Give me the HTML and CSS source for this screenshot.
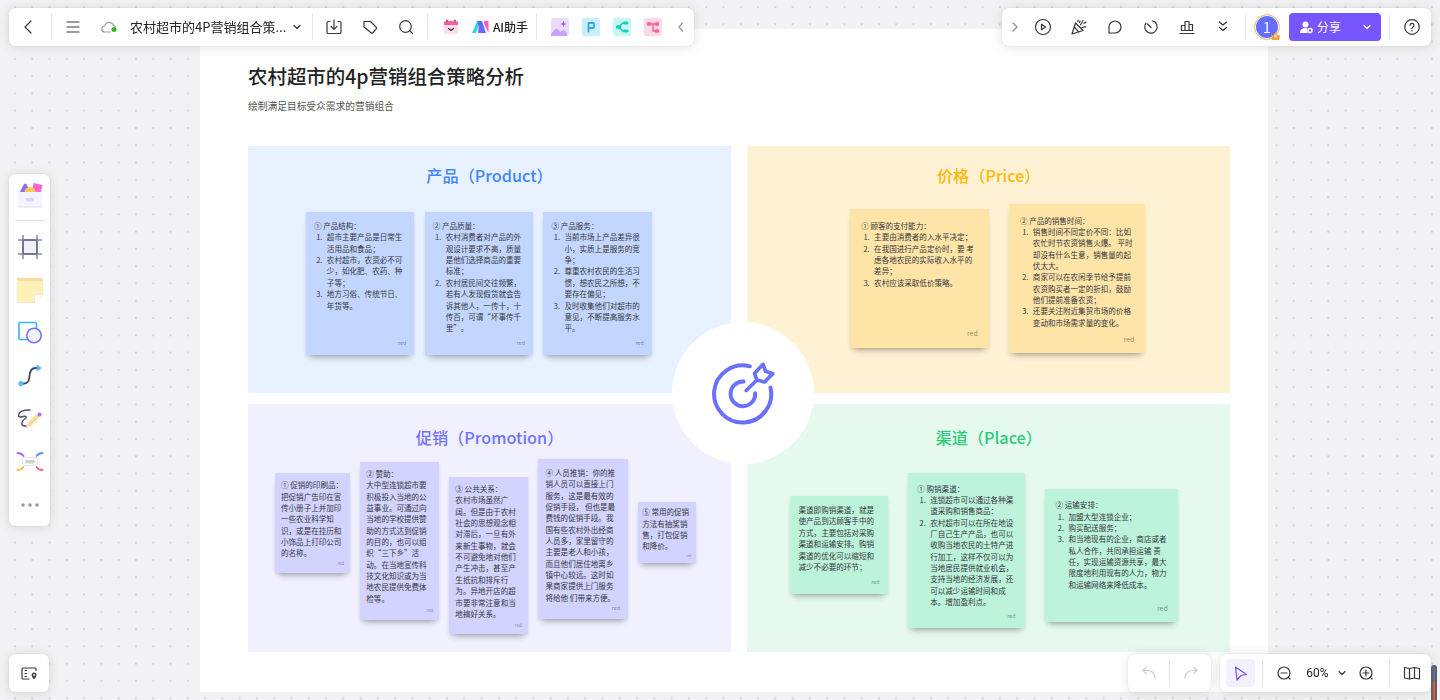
FILE: index.html
```html
<!DOCTYPE html>
<html lang="zh-CN">
<head>
<meta charset="utf-8">
<meta name="viewport" content="width=device-width, initial-scale=1">
<title>农村超市的4P营销组合策略分析</title>
<link rel="stylesheet" href="styles.css">
</head>
<body>
<svg class="dots" aria-hidden="true"><defs><pattern id="dot" x="14" y="6" width="17.28" height="17.28" patternUnits="userSpaceOnUse"><rect width="2" height="2" fill="#d6d6d9"/></pattern></defs><rect width="100%" height="100%" fill="url(#dot)"/></svg>

<main class="canvas">
  <section class="frame">
    <h1>农村超市的4p营销组合策略分析</h1>
    <p class="subtitle">绘制满足目标受众需求的营销组合</p>
    <div class="quadrants">
      <section class="quadrant product">
        <h2>产品（Product）</h2>
        <div class="notes">
          <article class="note n-product"><div><p>① 产品结构：</p><ol><li>超市主要产品是日常生活用品和食品；</li><li>农村超市，农资必不可少，如化肥、农药、种子等；</li><li>地方习俗、传统节日、年货等。</li></ol></div><span class="author">red</span></article>
          <article class="note n-product"><div><p>② 产品质量：</p><ol><li>农村消费者对产品的外观设计要求不高，质量是他们选择商品的重要标准；</li><li>农村居民间交往频繁，若有人发现假货就会告诉其他人，一传十，十传百，可谓“坏事传千里”。</li></ol></div><span class="author">red</span></article>
          <article class="note n-product"><div><p>③ 产品服务：</p><ol><li>当前市场上产品差异很小，实质上是服务的竞争；</li><li>尊重农村农民的生活习惯，想农民之所想，不要存在偏见；</li><li>及时收集他们对超市的意见，不断提高服务水平。</li></ol></div><span class="author">red</span></article>
        </div>
      </section>
      <section class="quadrant price">
        <h2>价格（Price）</h2>
        <div class="notes">
          <article class="note n-pay"><div><p>① 顾客的支付能力：</p><ol><li>主要由消费者的入水平决定；</li><li>在我国进行产品定价时，要 考虑各地农民的实际收入水平的差异；</li><li>农村应该采取低价策略。</li></ol></div><span class="author large">red</span></article>
          <article class="note n-time"><div><p>② 产品的销售时间：</p><ol><li>销售时间不同定价不同：比如农忙时节农资销售火爆。 平时却没有什么生意，销售量的起伏太大。</li><li>商家可以在农闲季节给予提前农资购买者一定的折扣，鼓励他们提前准备农资；</li><li>还要关注附近集贸市场的价格变动和市场需求量的变化。</li></ol></div><span class="author large">red</span></article>
        </div>
      </section>
      <section class="quadrant promotion">
        <h2>促销（Promotion）</h2>
        <div class="notes">
          <article class="note n-print"><div><p>① 促销的印刷品：</p><p>把促销广告印在宣传小册子上并加印一些农业科学知识，或是在挂历和小饰品上打印公司的名称。</p></div><span class="author small">red</span></article>
          <article class="note n-sponsor"><div><p>② 赞助：</p><p>大中型连锁超市要积极投入当地的公益事业。可通过向当地的学校提供赞助的方式达到促销的目的，也可以组织“三下乡”活动。在当地宣传科技文化知识或为当地农民提供免费体检等。</p></div><span class="author small">red</span></article>
          <article class="note n-public"><div><p>③ 公共关系：</p><p>农村市场虽然广阔。但是由于农村社会的思想观念相对滞后，一旦有外来新生事物，就会不可避免地对他们产生冲击，甚至产生抵抗和排斥行为。异地开店的超市要非常注意和当地搞好关系。</p></div><span class="author small">red</span></article>
          <article class="note n-people"><div><p>④ 人员推销：你的推销人员可以直接上门服务，这是最有效的促销手段， 但也是最费钱的促销手段。我国有些农村外出经商人员多，家里留守的主要是老人和小孩，而且他们居住地离乡镇中心较远。这时如果商家提供上门服务将给他 们带来方便。</p></div><span class="author">red</span></article>
          <article class="note n-common"><div><p>⑤ 常用的促销方法有抽奖销售，打包促销和降价。</p></div><span class="author tiny">red</span></article>
        </div>
      </section>
      <section class="quadrant place">
        <h2>渠道（Place）</h2>
        <div class="notes">
          <article class="note n-channel"><div><p>渠道即购销渠道，就是使产品到达顾客手中的方式，主要包括对采购渠道和运输安排。购销渠道的优化可以缩短和减少不必要的环节；</p></div><span class="author">red</span></article>
          <article class="note n-purchase"><div><p>① 购销渠道：</p><ol><li>连锁超市可以通过各种渠道采购和销售商品：</li><li>农村超市可以在所在地设厂自己生产产品，也可以收购当地农民的土特产进行加工，这样不仅可以为当地居民提供就业机会，支持当地的经济发展，还可以减少运输时间和成本。增加盈利点。</li></ol></div><span class="author">red</span></article>
          <article class="note n-transport"><div><p>② 运输安排：</p><ol><li>加盟大型连锁企业；</li><li>购买配送服务；</li><li>和当地现有的企业，商店或者私人合作，共同承担运输 责任，实现运输资源共享，最大限度地利用现有的人力，物力和运输网络来降低成本。</li></ol></div><span class="author large">red</span></article>
        </div>
      </section>
      <div class="hub">
        <svg viewBox="150 150 195 195" fill="none" stroke="#6a70ff" stroke-width="12" stroke-linecap="round" stroke-linejoin="round" aria-hidden="true"><path d="M267 166A86 86 0 1 0 329 230"/><path d="M248 212A37 37 0 1 0 283 247"/><path d="M256 239L288 207M288 207L281 187L307 160L314 181L336 188L311 213Z" stroke-width="11"/></svg>
      </div>
    </div>
  </section>
</main>

<header class="topbar">
  <nav class="panel bar file-bar" aria-label="文件">
    <button class="w36" aria-label="返回"><svg width="18" height="18" viewBox="0 0 18 18"><path d="M12 3L6 9l6 6"/></svg></button>
    <i class="divider"></i>
    <button class="w32" aria-label="菜单"><svg width="18" height="18" viewBox="0 0 18 18"><path d="M3 4h12M3 9h12M3 14h12"/></svg></button>
    <button class="w40" aria-label="已保存"><svg width="18" height="18" viewBox="0 0 18 18"><path d="M10 14H5a3 3 0 0 1-.3-6 4.500 4.500 0 0 1 8.700-.5A3 3 0 0 1 15.500 9" stroke="#999"/><circle cx="14" cy="11.500" r="2.500" fill="#3fb618" stroke="none"/></svg></button>
    <button class="doc-title"><span>农村超市的4P营销组合策...</span><svg width="10" height="10" viewBox="0 0 10 10"><path d="M2 3.500l3 3 3-3"/></svg></button>
    <i class="divider"></i>
    <button class="w32" aria-label="导出"><svg width="18" height="18" viewBox="0 0 18 18"><path d="M5 3.500H3.500a1.500 1.500 0 0 0-1.500 1.500v9a1.500 1.500 0 0 0 1.500 1.500h11a1.500 1.500 0 0 0 1.500-1.500V5a1.500 1.500 0 0 0-1.500-1.500H13M9 2v9M6 8.300l3 3 3-3"/></svg></button>
    <button class="w40" aria-label="标签"><svg width="18" height="18" viewBox="0 0 18 18"><path d="M3 3.500h6.500l6 6a1 1 0 0 1 0 1.200l-4 4.300a1 1 0 0 1-1.200 0L3 9z"/></svg></button>
    <button class="w32" aria-label="搜索"><svg width="18" height="18" viewBox="0 0 18 18"><circle cx="8.500" cy="8.500" r="5.800"/><path d="M13 13l2.500 2.500"/></svg></button>
    <i class="divider"></i>
    <button class="w36" aria-label="日程"><svg class="solid" width="16" height="16" viewBox="0 0 16 16"><rect x="1" y="2" width="14" height="13" rx="2" fill="#ffdce9"/><path d="M1 6V4a2 2 0 0 1 2-2h10a2 2 0 0 1 2 2v2z" fill="#ff5c9c"/><path d="M4 1v1M12 1v1M5.500 9.500l2.500 2 2.500-2" fill="none" stroke="#333" stroke-width="1.200"/></svg></button>
    <button class="ai"><svg class="solid" width="17" height="12" viewBox="0 0 17 12"><path d="M5 0h4L4 12H0z" fill="#35d6e8"/><path d="M5 0h5l4 12H9.500z" fill="#5a6bff"/><path d="M7 4l3 8H6z" fill="#8b5cff"/><path d="M12 0h4.500v12L12 3z" fill="#ff5cb8"/></svg><span>AI助手</span></button>
    <i class="divider"></i>
    <div class="apps">
      <button aria-label="图片"><svg class="solid" width="18" height="18" viewBox="0 0 18 18"><rect width="18" height="18" rx="2" fill="#e9ddff"/><path d="M0 16l3-3.500q2-3 4.500-.5l2 2 2-1.500q2-1 3.500 1.500l1 2v2H0z" fill="#c8a0f8"/><path d="M12.500 3l.9 2.100 2.100.9-2.100.9-.9 2.100-.9-2.100L9.500 6l2.100-.9z" fill="#a063f0"/></svg></button>
      <button aria-label="演示"><svg class="solid" width="18" height="18" viewBox="0 0 18 18"><rect width="18" height="18" rx="2" fill="#c9eeff"/><path d="M6.500 13.500V5H11a1 1 0 0 1 1 1v3a1 1 0 0 1-1 1H6.500" fill="none" stroke="#2fa8ec" stroke-width="1.800"/></svg></button>
      <button aria-label="脑图"><svg class="solid" width="18" height="18" viewBox="0 0 18 18"><rect width="18" height="18" rx="2" fill="#c6f7f1"/><path d="M13 5h-2Q8 5 7 9q1 4 4 4h2" fill="none" stroke="#12cfc0" stroke-width="1.500"/><ellipse cx="5.500" cy="9" rx="2.700" ry="2" fill="#12cfc0"/><rect x="10" y="3.500" width="5.500" height="3" rx="1.500" fill="#12cfc0"/><rect x="10" y="11.500" width="5.500" height="3" rx="1.500" fill="#12cfc0"/></svg></button>
      <button aria-label="流程图"><svg class="solid" width="18" height="18" viewBox="0 0 18 18"><rect width="18" height="18" rx="2" fill="#ffd9e6"/><path d="M5 6h8M9 6v7h4" fill="none" stroke="#ff5c9c" stroke-width="1.400"/><rect x="3" y="4.300" width="4" height="3.500" rx="1" fill="#ff5c9c"/><rect x="11" y="4.300" width="4" height="3.500" rx="1" fill="#ff5c9c"/><rect x="11" y="11.300" width="4" height="3.500" rx="1" fill="#ff5c9c"/></svg></button>
    </div>
    <button class="w26" aria-label="收起"><svg width="12" height="12" viewBox="0 0 12 12"><path d="M7.500 2L4 6l3.500 4" stroke="#999"/></svg></button>
  </nav>

  <nav class="panel bar share-bar" aria-label="协作">
    <button class="w23" aria-label="展开"><svg width="12" height="12" viewBox="0 0 12 12"><path d="M5 2l4 4-4 4" stroke="#888"/></svg></button>
    <button class="w36" aria-label="播放"><svg width="18" height="18" viewBox="0 0 18 18"><circle cx="9" cy="9" r="7.500"/><path d="M7.500 6.300v5.400L11.500 9z"/></svg></button>
    <button class="w36" aria-label="庆祝"><svg width="18" height="18" viewBox="0 0 18 18"><path d="M5.500 5L2 16l11-3.500zM4.300 9l4.500 5M8 3.500V2M10.500 7l2.500-4.500M12 9.500q2-1 4-.5M14 5.500L16 4M9.500 4.500l.5-1.500"/></svg></button>
    <button class="w36" aria-label="评论"><svg width="18" height="18" viewBox="0 0 18 18"><path d="M3 15V9a6 6 0 1 1 6 6z"/></svg></button>
    <button class="w36" aria-label="计时"><svg width="18" height="18" viewBox="0 0 18 18"><path d="M10.500 3a6.200 6.200 0 1 1-6.500 2.200M9 9.500L5.500 6M11 3q1.800.5 3 1.800"/></svg></button>
    <button class="w36" aria-label="投票"><svg width="18" height="18" viewBox="0 0 18 18"><path d="M2 15.500h14M3.500 12.500V7.500H7v5zM7 12.500V3.500h4v9zM11 12.500V6.500h3.500v6z"/></svg></button>
    <button class="w36" aria-label="更多"><svg width="18" height="18" viewBox="0 0 18 18"><path d="M5.500 4L9 7l3.500-3M5.500 9.500l3.500 3 3.500-3"/></svg></button>
    <i class="divider near"></i>
    <button class="avatar" aria-label="用户 1"><span>1</span><svg class="solid" width="9" height="8" viewBox="0 0 9 8"><path d="M0 3l2 .5L4.500 0 7 3.500 9 3 8 8H1z" fill="#f5a03c"/><circle cx="4.500" cy="4" r="1.500" fill="#ffe0a0"/></svg></button>
    <button class="share"><svg class="solid" width="13" height="13" viewBox="0 0 13 13"><circle cx="5.500" cy="3.500" r="3" fill="#fff"/><path d="M0 12q0-5 5.500-5 1.500 0 2.200.5-1.700 2 .1 4.500z" fill="#fff"/><circle cx="10" cy="9.500" r="2" fill="none" stroke="#fff" stroke-width="1.600"/></svg><span>分享</span><svg width="10" height="10" viewBox="0 0 10 10"><path d="M2 3.500l3 3 3-3" stroke="#fff"/></svg></button>
    <i class="divider wide"></i>
    <button class="w28" aria-label="帮助"><svg width="18" height="18" viewBox="0 0 18 18"><circle cx="9" cy="9" r="7.300"/><path d="M7 7.300a2 2 0 1 1 2.800 1.900q-.8.400-.8 1.300M9 12.600v.3"/></svg></button>
  </nav>
</header>

<aside class="panel tools" aria-label="工具">
  <button aria-label="素材"><svg width="30" height="30" viewBox="0 0 30 30"><rect x="3" y="10" width="24" height="17" rx="2" fill="#eeecff"/><path d="M5 12l4-8 2-.5 4 7.500-2 2H6z" fill="#8c6bff"/><path d="M18.500 3l9 2-2 8-8-2z" fill="#ff66cf"/><path d="M9.500 12.500a5.500 5.500 0 0 1 11 0z" fill="#ffc94d"/><path d="M3 12h24v13a2 2 0 0 1-2 2H5a2 2 0 0 1-2-2z" fill="#f4f3ff"/><path d="M4 27h22" stroke="#dddcea" stroke-width="1"/><path d="M11 18h8v2q0 1.500-2 1.500h-4q-2 0-2-1.500z" fill="#d9d8f7"/></svg></button>
  <hr>
  <button aria-label="画框"><svg width="26" height="26" viewBox="0 0 26 26"><rect x="6" y="6" width="14" height="14" fill="#f1f1f5" stroke="#4b4f69" stroke-width="1.500"/><path d="M1.500 6H6M20 6h4.500M1.500 20H6M20 20h4.500M6 1.500V6M20 1.500V6M6 20v4.500M20 20v4.500" stroke="#8487ab" stroke-width="1.500"/></svg></button>
  <button aria-label="便签"><svg width="28" height="28" viewBox="0 0 28 28"><path d="M1.500 2h25v16.500l-8 8h-17z" fill="#fff0b8" stroke="#efe3bd" stroke-width=".6"/><path d="M1.500 2h25v3h-25z" fill="#f9dea1"/><path d="M18.500 26.500v-8h8z" fill="#fff" stroke="#e6e0cf" stroke-width=".5"/></svg></button>
  <button aria-label="形状"><svg width="26" height="26" viewBox="0 0 26 26"><rect x="2" y="2.500" width="17.500" height="17" rx="1" fill="#fff" stroke="#38b6f0" stroke-width="1.600"/><circle cx="17" cy="15.500" r="7.200" fill="#f4f4ff" stroke="#7a70ff" stroke-width="1.600"/></svg></button>
  <button aria-label="连线"><svg width="26" height="26" viewBox="0 0 26 26"><path d="M3.500 20.500h4q4.500 0 5-7.500.500-8 6-8h3" stroke="#40435a" stroke-width="1.800"/><circle cx="4" cy="20.500" r="2.600" fill="#50bbff"/><path d="M19.500 1.500L25 5l-5.500 3.500z" fill="#50bbff"/></svg></button>
  <button aria-label="画笔"><svg width="26" height="26" viewBox="0 0 26 26"><path d="M13 4Q2 4 1.500 9q0 3 4.500 1.500 4-1 3 1.500-5 3.500-4 6.500.5 1.500 4 1.500" stroke="#4e5168" stroke-width="1.500"/><path d="M10 21.500l1-4.500L21 7l4 3.500-10.500 10z" fill="#fff" stroke="#e2e2e2" stroke-width=".8"/><path d="M12.500 18.500l8-8" stroke="#ffd887" stroke-width="3.500"/><circle cx="22.500" cy="8.500" r="2" fill="#b868f3"/></svg></button>
  <button aria-label="思维导图"><svg width="28" height="26" viewBox="0 0 28 26" stroke-width="1.800"><path d="M1.500 4q4 0 6 3" stroke="#a46cf2"/><path d="M26.500 4q-4 0-6 3" stroke="#5797ff"/><path d="M1.500 21q4 0 6-3" stroke="#ffc13a"/><path d="M26.500 21q-4 0-6-3" stroke="#ff5c97"/><rect x="6.500" y="8.500" width="15" height="8" rx="1" fill="#fff" stroke="#e4e4e4" stroke-width="1"/><path d="M9.500 11h9v3.500h-9z" fill="#cfcfcf"/></svg></button>
  <button aria-label="更多工具"><svg width="20" height="6" viewBox="0 0 20 6"><g fill="#999"><circle cx="3" cy="3" r="1.800"/><circle cx="10" cy="3" r="1.800"/><circle cx="17" cy="3" r="1.800"/></g></svg></button>
</aside>

<footer class="bottombar">
  <div class="panel bar"><button class="w40" aria-label="图层面板"><svg width="18" height="18" viewBox="0 0 18 18"><path d="M9 15H3a1 1 0 0 1-1-1V5a1 1 0 0 1 1-1h12a1 1 0 0 1 1 1v1.500"/><path d="M5 6.500h1.500M5 9.500h1.500M5 12.500h1.500"/><path d="M14 8.500a2.500 2.500 0 0 0-2.500 2.500q0 2 2.500 4.500 2.500-2.500 2.500-4.500A2.500 2.500 0 0 0 14 8.500z" fill="#444" stroke="none"/><circle cx="14" cy="11" r=".9" fill="#fff" stroke="none"/></svg></button></div>
  <div class="bottom-right">
    <div class="panel bar history"><button class="w41" aria-label="撤销"><svg width="16" height="16" viewBox="0 0 16 16"><path d="M5 2.500L2 5.500l3 3M2 5.500h5q6.500.5 7 7.500" stroke="#ccc"/></svg></button><i class="divider flush"></i><button class="w41" aria-label="重做"><svg width="16" height="16" viewBox="0 0 16 16"><path d="M11 2.500l3 3-3 3M14 5.500H9Q2.500 6 2 13" stroke="#ccc"/></svg></button></div>
    <div class="panel bar view">
      <button class="cursor" aria-label="选择"><svg width="16" height="16" viewBox="0 0 16 16"><path d="M2.500 2l11 7.500-5.500 1L4 15z" stroke="#7452f5"/></svg></button>
      <i class="divider view-gap"></i>
      <button class="w30" aria-label="缩小"><svg width="18" height="18" viewBox="0 0 18 18"><circle cx="9" cy="9" r="6"/><path d="M6 9h6M13.300 13.300L15 15"/></svg></button>
      <button class="level"><span>60%</span><svg width="10" height="10" viewBox="0 0 10 10"><path d="M2 3.500l3 3 3-3"/></svg></button>
      <button class="w30" aria-label="放大"><svg width="18" height="18" viewBox="0 0 18 18"><circle cx="9" cy="9" r="6"/><path d="M6 9h6M9 6v6M13.300 13.300L15 15"/></svg></button>
      <i class="divider wide"></i>
      <button class="w28" aria-label="小地图"><svg width="18" height="18" viewBox="0 0 18 18"><path d="M1.500 3.500l5 1 5-1 5 1V15l-5-1-5 1-5-1zM6.500 4.500V15M11.500 3.500V14"/></svg></button>
    </div>
  </div>
</footer>
<i class="meter" aria-hidden="true"></i>
</body>
</html>
```
FILE: styles.css
```css
* { box-sizing: border-box; }

body {
  margin: 0;
  min-height: 100vh;
  overflow: hidden;
  background: #f2f2f4;
  color: #222;
  font-family: "Noto Sans CJK SC", "Noto Sans", sans-serif;
}

h1, h2, p, ol { margin: 0; }

button {
  display: flex;
  align-items: center;
  justify-content: center;
  flex: none;
  padding: 0;
  border: 0;
  background: none;
  color: inherit;
  font: inherit;
}

svg { display: block; flex: none; }

.bar svg {
  fill: none;
  stroke: #383838;
  stroke-width: 1.2;
  stroke-linecap: round;
  stroke-linejoin: round;
}
.bar svg.solid { stroke: none; }
.tools svg { fill: none; stroke-linecap: round; stroke-linejoin: round; }

.dots { position: fixed; inset: 0; width: 100%; height: 100%; }

/* Board: content is authored at full size and scaled by the view zoom. */
.canvas { position: relative; padding: 29px 172px 8px 200px; }

.frame {
  zoom: 0.54;
  padding: 60px 70px 74px 89px;
  background: #fff;
}

h1 { font-size: 36px; line-height: 54px; font-weight: 500; }

.subtitle { margin: 15px 0 60px; font-size: 18px; line-height: 27px; color: #555; }

.quadrants {
  position: relative;
  display: grid;
  grid-template-columns: 1fr 1fr;
  gap: 20px 30px;
}

.quadrant { min-height: 459px; padding-top: 36px; }
.quadrant h2 { font-size: 30px; line-height: 40px; font-weight: 500; text-align: center; }

.notes { display: flex; align-items: flex-start; gap: 19px; margin-top: 26px; }

.product { background: #e8f1ff; --note: #c3d6ff; }
.product h2 { color: #4086ff; }
.product .notes { padding-left: 107px; }
.price { background: #fff2d4; --note: #ffe4a8; }
.price h2 { color: #ffb80a; }
.price .notes { padding-left: 191px; gap: 38px; }
.promotion { background: #f0f0ff; --note: #d3d3ff; }
.promotion h2 { color: #7073ff; }
.promotion .notes { padding-left: 50px; }
.place { background: #e5f9ee; --note: #bdf3da; }
.place h2 { color: #29cc7a; }
.place .notes { padding-left: 80px; gap: 38px; }
.promotion, .place { padding-top: 43px; }
.promotion .notes, .place .notes { margin-top: 19px; }

.note {
  display: flex;
  flex-direction: column;
  justify-content: space-between;
  flex: none;
  background: var(--note);
  box-shadow: 0 10px 12px -7px rgba(0, 0, 0, 0.3), 0 2px 6px rgba(0, 0, 0, 0.08);
  color: #34363d;
  font-size: 14px;
  line-height: 21px;
  text-spacing-trim: space-all;
}
.note ol { padding-left: 19px; }
.note li { padding-left: 5px; }

.author { align-self: flex-end; font-size: 10px; line-height: 12px; color: rgba(0, 0, 0, 0.45); }
.author.large { font-size: 13px; }
.author.small { font-size: 8px; }
.author.tiny { font-size: 6px; line-height: 8px; }

.n-product { width: 201px; min-height: 264px; margin-top: 21px; padding: 15px; }
.n-pay { width: 256px; min-height: 256px; margin-top: 16px; padding: 20px; }
.n-time { width: 252px; min-height: 276px; margin-top: 6px; padding: 20px; }
.n-print { width: 139px; min-height: 184px; margin-top: 26px; padding: 11px; }
.n-sponsor { width: 146px; min-height: 292px; margin-top: 5px; padding: 11px; }
.n-public { width: 145px; min-height: 291px; margin-top: 33px; padding: 11px; }
.n-people { width: 166px; min-height: 296px; padding: 14px; }
.n-common { width: 107px; min-height: 113px; margin-top: 79px; padding: 8px; }
.n-channel { width: 180px; min-height: 181px; margin-top: 68px; padding: 15px; }
.n-purchase { width: 216px; min-height: 287px; margin-top: 26px; padding: 17px; }
.n-transport { width: 246px; min-height: 246px; margin-top: 55px; padding: 19px; }

.hub {
  position: absolute;
  top: 50%;
  left: 50%;
  display: grid;
  place-items: center;
  width: 263px;
  height: 263px;
  margin: -142px 0 0 -124px;
  border-radius: 50%;
  background: #fff;
}
.hub svg { width: 120px; height: 120px; }

/* Floating panels */
.panel {
  border-radius: 6px;
  background: #fff;
  box-shadow: 0 1px 12px rgba(0, 0, 0, 0.12), 0 0 1px rgba(0, 0, 0, 0.2);
}
.bar { display: flex; align-items: center; height: 38px; }

.divider { flex: none; width: 1px; height: 26px; margin: 0 5px; background: #e6e6e6; }
.divider.near { margin: 0 8px 0 4px; }
.divider.wide { margin: 0 8px; }
.divider.flush { margin: 0; }
.divider.view-gap { margin: 0 6px 0 7px; }

.w23 { width: 23px; }
.w26 { width: 26px; }
.w28 { width: 28px; }
.w30 { width: 30px; }
.w32 { width: 32px; }
.w36 { width: 36px; }
.w40 { width: 40px; }
.w41 { width: 41px; }

.topbar {
  position: fixed;
  top: 8px;
  left: 9px;
  right: 9px;
  display: flex;
  justify-content: space-between;
}
.file-bar { padding-left: 1px; }
.doc-title { justify-content: space-between; width: 178px; padding: 0 5px 0 1px; font-size: 13px; line-height: 20px; }
.ai { gap: 4px; width: 62px; font-size: 12px; line-height: 18px; font-weight: 500; }
.apps { display: flex; gap: 13px; margin: 0 6px 0 9px; }

.share-bar { padding-right: 5px; }
.avatar {
  position: relative;
  width: 26px;
  height: 26px;
  border: 1px solid #ffd37a;
  border-radius: 50%;
  background: #666eff;
  box-shadow: inset 0 0 0 1px #fff;
  color: #fff;
  font-size: 14px;
  line-height: 20px;
}
.avatar svg { position: absolute; right: -1px; bottom: -1px; }
.share {
  gap: 4px;
  width: 92px;
  height: 28px;
  margin-left: 9px;
  padding-left: 2px;
  border-radius: 4px;
  background: #7856ff;
  color: #fff;
  font-size: 12px;
  line-height: 18px;
}
.share svg:last-child { margin-left: 17px; }

.tools {
  position: fixed;
  top: 50%;
  left: 9px;
  display: flex;
  flex-direction: column;
  width: 41px;
  transform: translateY(-50%);
}
.tools button { height: 43px; }
.tools button:first-child { height: 42px; }
.tools hr { width: 29px; height: 1px; margin: 4px auto; border: 0; background: #e3e3e3; }

.bottombar {
  position: fixed;
  right: 9px;
  bottom: 8px;
  left: 9px;
  display: flex;
  justify-content: space-between;
}
.bottom-right { display: flex; gap: 9px; }
.view { padding: 0 5px 0 6px; }
.cursor { width: 29px; height: 28px; border-radius: 4px; background: #f3f1ff; }
.level { gap: 8px; width: 52px; padding-left: 3px; font-family: Roboto, sans-serif; font-size: 12px; line-height: 16px; }

.meter {
  position: fixed;
  right: 3px;
  bottom: 0;
  width: 6px;
  height: 35px;
  border: 2px solid #566072;
  border-bottom: 0;
  border-radius: 3px 3px 0 0;
  background: linear-gradient(#667084 14px, #e8541e 14px);
}
```
